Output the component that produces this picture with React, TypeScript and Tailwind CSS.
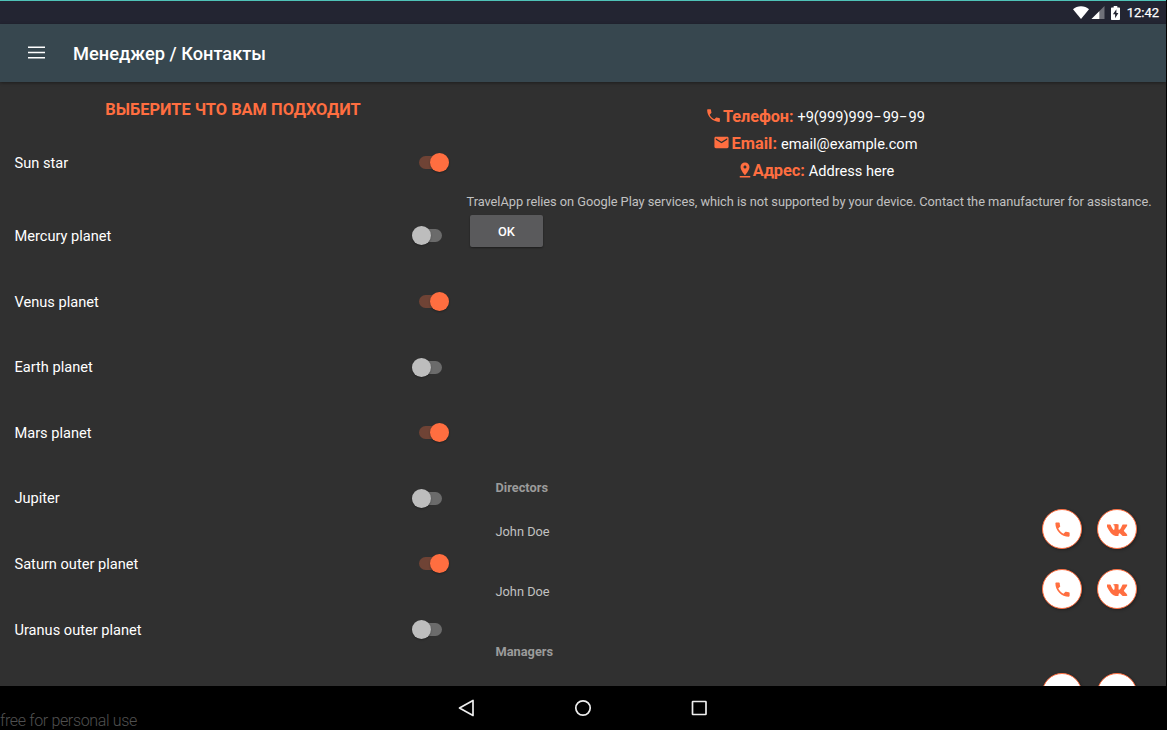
import React from "react";
import { MdPhone, MdEmail, MdPinDrop } from "react-icons/md";

const planets = [
  { name: "Mercury planet", on: false },
  { name: "Venus planet", on: true },
  { name: "Earth planet", on: false },
  { name: "Mars planet", on: true },
  { name: "Jupiter", on: false },
  { name: "Saturn outer planet", on: true },
  { name: "Uranus outer planet", on: false },
];

function VkIcon() {
  return (
    <svg width="21" height="20" viewBox="0 0 1920 1792" fill="currentColor">
      <path d="M1853 520q23 64-150 294-24 32-65 85-78 100-90 131-17 41 14 81 17 21 81 82h1l1 1 1 1 2 2q141 131 191 221 3 5 6.500 12.500t7 26.500-.5 34-25 27.500-59 12.500l-256 4q-24 5-56-5t-52-22l-20-12q-30-21-70-64t-68.500-77.500-61-58-56.500-15.500q-3 1-8 3.500t-17 14.500-21.500 29.500-17 52-6.500 77.500q0 15-3.500 27.500t-7.500 18.500l-4 5q-18 19-53 22h-115q-71 4-146-16.500t-131.500-53-103-66-70.500-57.500l-25-24q-10-10-27.500-30t-71.500-91-106-151-122.500-211-130.500-272q-6-16-6-27t3-16l4-6q15-19 57-19l274-2q12 2 23 6.500t16 8.500l5 3q16 11 24 32 20 50 46 103.500t41 81.500l16 29q29 60 56 104t48.500 68.500 41.500 38.500 34 14 27-5q2-1 5-5t12-22 13.500-47 9.500-81 0-125q-2-40-9-73t-14-46l-6-12q-25-34-85-43-13-2 5-24 16-19 38-30 53-26 239-24 82 1 135 13 20 5 33.500 13.500t20.500 24 10.500 32 3.500 45.500-1 55-2.500 70.500-1.500 82.500q0 11-1 42t-.5 48 3.500 40.500 11.500 39 22.500 24.500q8 2 17 4t26-11 38-34.500 52-67 68-107.500q60-104 107-225 4-10 10-17.500t11-10.500l4-3 5-2.500 13-3 20-.5 288-2q39-5 64 2.500t31 16.500z" />
    </svg>
  );
}

function Toggle({ on }: { on: boolean }) {
  return on ? (
    <div className="mr-[17px] flex h-[13px] w-[30px] items-center justify-end rounded-full bg-[#6f4335]">
      <div className="h-[19px] w-[19px] shrink-0 rounded-full bg-[#ff6e40] shadow-[0_1px_2px_rgba(0,0,0,0.3)]" />
    </div>
  ) : (
    <div className="mr-[24px] flex h-[13px] w-[30px] items-center rounded-full bg-[#6b6b6b]">
      <div className="h-[19px] w-[19px] shrink-0 rounded-full bg-[#bdbdbd] shadow-[0_1px_2px_rgba(0,0,0,0.3)]" />
    </div>
  );
}

function Row({ name, on }: { name: string; on: boolean }) {
  return (
    <div className="flex h-[65.6px] shrink-0 items-center justify-between pl-[14.5px]">
      <span className="pt-[2px] text-[14.6px] text-white">{name}</span>
      <Toggle on={on} />
    </div>
  );
}

function Buttons() {
  return (
    <div className="flex gap-[15px] pr-[29px]">
      <button className="flex h-10 w-10 items-center justify-center rounded-full border border-[#ff6e40] bg-white text-[#ff6e40] shadow-[1px_1px_3px_rgba(0,0,0,0.3)]">
        <MdPhone size={19} />
      </button>
      <button className="flex h-10 w-10 items-center justify-center rounded-full border border-[#ff6e40] bg-white text-[#ff6e40] shadow-[1px_1px_3px_rgba(0,0,0,0.3)]">
        <VkIcon />
      </button>
    </div>
  );
}

export default function App() {
  return (
    <div className="flex h-[730px] w-[1167px] flex-col overflow-hidden bg-black font-['Roboto',sans-serif]">
      <div className="mr-px flex h-6 shrink-0 items-center justify-end border-t border-[#4fc3b8] bg-[#232532] pr-[7px] text-white">
        <svg width="16" height="14" viewBox="0 0 16 14" fill="currentColor">
          <path d="M0 3.2C4-.7 12-.7 16 3.2L8 13z" />
        </svg>
        <svg className="ml-[2px]" width="14" height="14" viewBox="0 0 14 14" fill="currentColor">
          <path d="M13.5 0v13H.5z" opacity=".35" />
          <path d="M8.3 5.2V13H.5z" />
        </svg>
        <svg className="ml-[6px]" width="9" height="14" viewBox="0 0 9 14">
          <path d="M2.7 0h3.6v1.4H8c.6 0 1 .4 1 1V13c0 .6-.4 1-1 1H1c-.6 0-1-.4-1-1V2.4c0-.6.4-1 1-1h1.7z" fill="currentColor" />
          <path d="M5.4 3.2 1.9 8.3h2.2v3.9l3.3-5.1H5.4z" fill="#232532" />
        </svg>
        <span className="ml-[7px] text-[13px] leading-none [-webkit-text-stroke:0.25px_white]">12:42</span>
      </div>
      <header className="z-10 mr-px flex h-[58px] shrink-0 items-center bg-[#37474f] pl-7 text-white shadow-[0_1px_3px_rgba(0,0,0,0.4)]">
        <svg className="-mt-px" width="17" height="14" viewBox="0 0 17 14" stroke="currentColor" strokeWidth="1.5">
          <path d="M0 1.2h17M0 6.5h17M0 11.8h17" />
        </svg>
        <h1 className="ml-7 pt-[2px] text-[18.25px] font-medium">Менеджер / Контакты</h1>
      </header>
      <main className="mr-px flex h-[604px] shrink-0 overflow-hidden bg-[#303030]">
        <section className="flex w-[466px] shrink-0 flex-col">
          <h2 className="mt-[15px] h-6 text-center text-[16.4px] font-bold leading-[25px] text-[#ff6e40]">
            ВЫБЕРИТЕ ЧТО ВАМ ПОДХОДИТ
          </h2>
          <div className="mt-[9px] mb-[7.5px]">
            <Row name="Sun star" on />
          </div>
          {planets.map((p) => (
            <Row key={p.name} {...p} />
          ))}
        </section>
        <section className="flex min-w-0 flex-1 flex-col">
          <div className="mt-[21px] flex flex-col items-center pr-[2px] text-[14.6px] text-white">
            <p className="flex h-[27px] items-center">
              <MdPhone className="mr-px mb-[2px] text-[#ff6e40]" size={17} />
              <b className="mr-1 pt-[2px] text-[16.3px] font-bold tracking-[-0.1px] text-[#ff6e40]">Телефон:</b>
              <span className="pt-[2px]">+9(999)999<span className="tracking-[1.1px]">−</span>99<span className="tracking-[1.1px]">−</span>99</span>
            </p>
            <p className="flex h-[27px] items-center">
              <MdEmail className="mr-[2px] mb-[2px] text-[#ff6e40]" size={17} />
              <b className="mr-1 pt-[2px] text-[16.4px] font-bold text-[#ff6e40]">Email:</b>
              <span className="pt-[2px]">email@example.com</span>
            </p>
            <p className="flex h-[27px] items-center">
              <MdPinDrop className="-mr-px mb-[2px] text-[#ff6e40]" size={18} />
              <b className="mr-1 pt-[2px] text-[16.4px] font-bold tracking-[-0.1px] text-[#ff6e40]">Адрес:</b>
              <span className="pt-[2px]">Address here</span>
            </p>
          </div>
          <p className="mt-[6px] h-6 whitespace-nowrap pl-[0.5px] text-[12.8px] leading-6 tracking-[-0.03px] text-[#c1c1c1]">
            TravelApp relies on Google Play services, which is not supported by your device. Contact the manufacturer for assistance.
          </p>
          <button className="mt-px ml-1 flex h-8 w-[73px] shrink-0 items-center justify-center rounded-[2px] bg-[#5a5a5c] pt-px text-[12.8px] font-medium text-white shadow-[0_1px_2px_rgba(0,0,0,0.4)]">
            OK
          </button>
          <div className="mt-[229px] flex flex-col pl-[29.5px] text-[12.8px] text-[#c1c1c1]">
            <h3 className="h-6 font-bold leading-6 text-[#9b9b9b]">Directors</h3>
            <div className="mt-[9px] flex h-[60px] justify-between">
              <span className="mt-[11px] h-6 leading-6">John Doe</span>
              <div className="h-10"><Buttons /></div>
            </div>
            <div className="flex h-[60px] justify-between">
              <span className="mt-[11px] h-6 leading-6">John Doe</span>
              <div className="h-10"><Buttons /></div>
            </div>
            <h3 className="mt-[11px] h-6 font-bold leading-6 text-[#9b9b9b]">Managers</h3>
            <div className="mt-[9px] flex justify-end"><Buttons /></div>
          </div>
        </section>
      </main>
      <nav className="relative flex h-11 shrink-0 items-center bg-black text-[#eeeeee]">
        <svg className="ml-[458px]" width="17" height="18" viewBox="0 0 17 18" fill="none" stroke="currentColor" strokeWidth="1.7" strokeLinejoin="round">
          <path d="M15 1.5v15L1.5 9z" />
        </svg>
        <svg className="ml-[99px]" width="18" height="18" viewBox="0 0 18 18" fill="none" stroke="currentColor" strokeWidth="1.7">
          <circle cx="9" cy="9" r="7.2" />
        </svg>
        <svg className="ml-[99px]" width="17" height="17" viewBox="0 0 17 17" fill="none" stroke="currentColor" strokeWidth="1.7">
          <rect x="1.5" y="1.5" width="13.5" height="13" rx=".5" />
        </svg>
        <span className="absolute -bottom-px left-0 text-[16px] font-light leading-[20px] tracking-[-0.35px] text-[#505050]">free for personal use</span>
      </nav>
    </div>
  );
}
